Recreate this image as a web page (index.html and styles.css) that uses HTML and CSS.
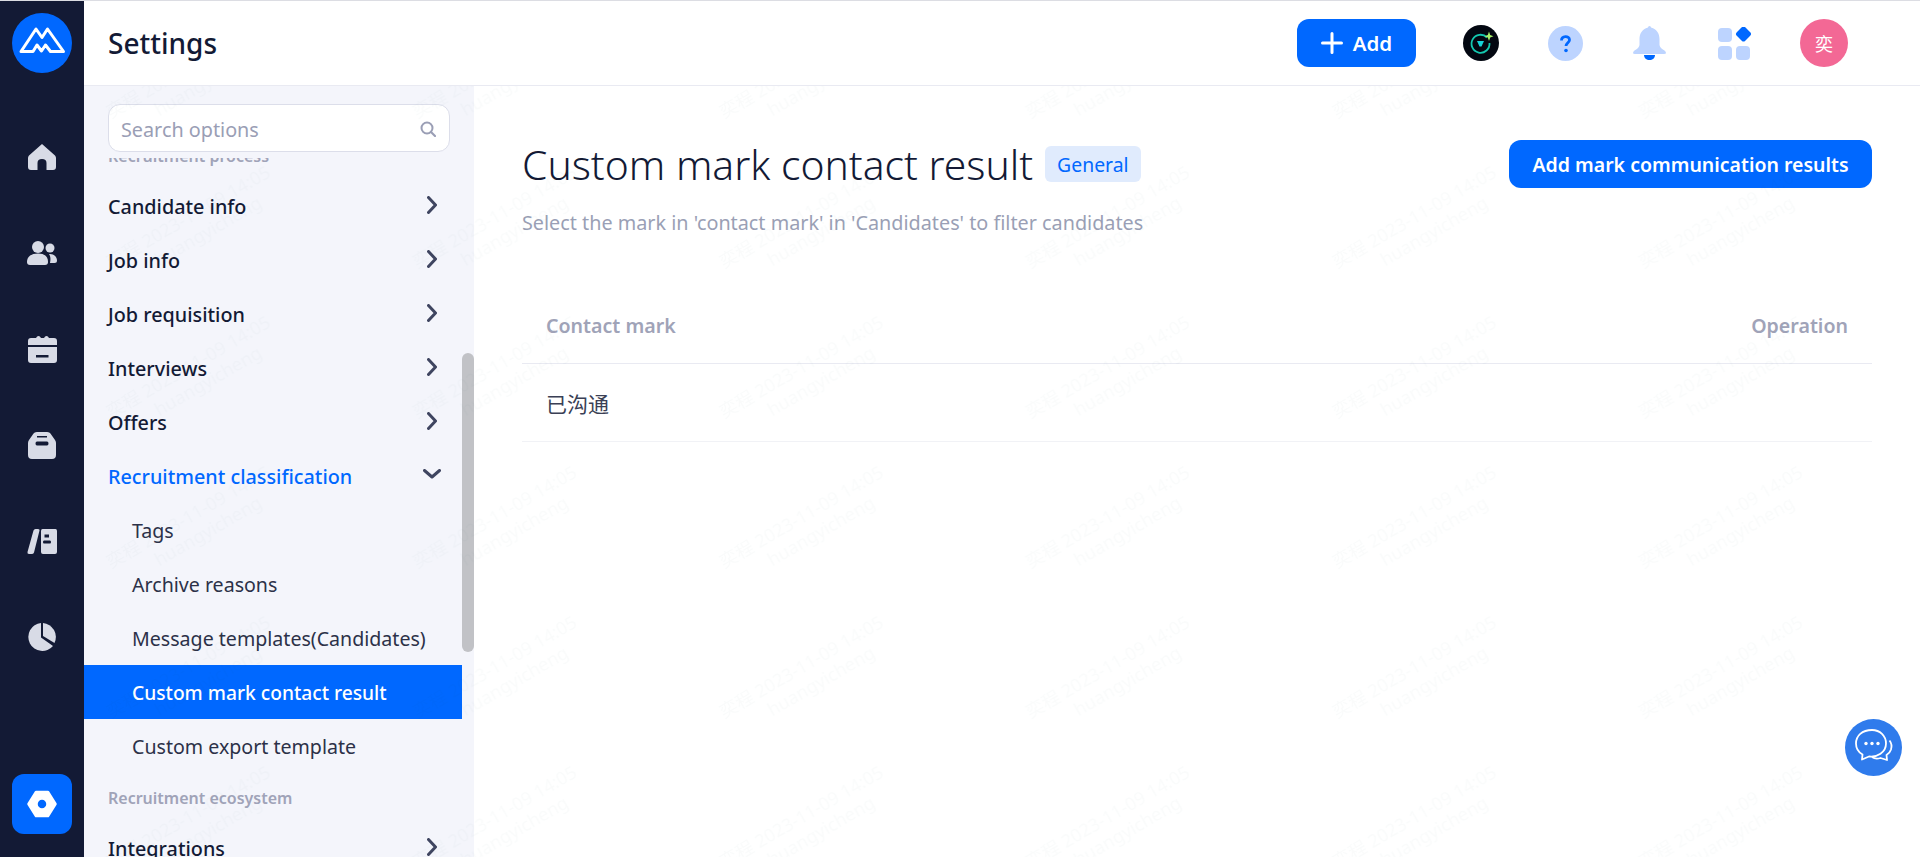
FILE: index.html
```html
<!DOCTYPE html>
<html lang="en">
<head>
<meta charset="utf-8">
<title>Settings</title>
<link rel="stylesheet" href="styles.css">
</head>
<body>
<div class="app">
  <nav class="rail">
    <div class="logo">
      <svg viewBox="0 0 60 60" width="60" height="60"><circle cx="30" cy="30" r="30" fill="#0068ff"/><path d="M9 38.500 24 16 30 24.500 35.500 16 51.500 38.500H38.500L33.500 32 29.500 38 25 32 21 38.500Z" fill="none" stroke="#fff" stroke-width="3" stroke-linejoin="round"/></svg>
    </div>
    <div class="rail-item">
      <svg viewBox="0 0 28 26" width="28" height="26"><path class="ri" d="M14 0 27 11.500Q28 12.500 28 14V23Q28 26 25 26H18.500V19Q18.500 15 14 15 9.500 15 9.500 19V26H3Q0 26 0 23V14Q0 12.500 1 11.500Z"/></svg>
    </div>
    <div class="rail-item">
      <svg viewBox="0 0 30 24" width="30" height="24"><circle class="ri" cx="11" cy="6" r="6"/><circle class="ri" cx="23" cy="7" r="4.500"/><path class="ri" d="M0 21C0 15 5 12.500 11 12.500S21 15 21 21Q21 24 18 24H3Q0 24 0 21Z"/><path class="ri" d="M22 13C27 12.500 30 16 30 19.500Q30 22 27.500 22H23C23.500 19 24 16 22 13Z"/></svg>
    </div>
    <div class="rail-item">
      <svg viewBox="0 0 29 27" width="29" height="27"><path class="ri" d="M0 9V5Q0 2 3 2H8Q9 0 10.500 0T13 2H16Q17 0 18.500 0T21 2H26Q29 2 29 5V9Z"/><path class="ri" fill-rule="evenodd" d="M0 11H29V24Q29 27 26 27H3Q0 27 0 24ZM8 19V21.500H20.500V19Z"/></svg>
    </div>
    <div class="rail-item">
      <svg viewBox="0 0 28 27" width="28" height="27"><path class="ri" fill-rule="evenodd" d="M9 0H19Q22 0 23.500 3L27 8Q28 9.500 28 11V23Q28 27 24 27H4Q0 27 0 23V11Q0 9.500 1 8L4.500 3Q6 0 9 0ZM9 4V5.500H19V4ZM9 9.500Q7.500 9.500 7.500 11.500T9 13.500H19Q20.500 13.500 20.500 11.500T19 9.500Z"/></svg>
    </div>
    <div class="rail-item">
      <svg viewBox="0 0 30 25" width="30" height="25"><path class="ri" d="M6.500 1.500Q7 0 8.500 0H11Q13 0 12.500 1.500L7 23.500Q6.500 25 4.500 25H2Q0 25 .5 23Z"/><path class="ri" fill-rule="evenodd" d="M15.500 0H28.500Q30 0 30 2V23Q30 25 28 25H16Q14 25 14 23V2Q14 0 15.500 0ZM17.500 5.500V8.500H22V5.500ZM17 11.500Q16 11.500 16 13T17 14.500H23Q24 14.500 24 13T23 11.500Z"/></svg>
    </div>
    <div class="rail-item">
      <svg viewBox="0 0 28 28" width="28" height="28"><path class="ri" d="M13 0V14.500L25 23A14 14 0 1 1 13 0Z"/><path class="ri" d="M15 0A14 14 0 0 1 26.500 20L15 13Z"/></svg>
    </div>
    <div class="rail-active">
      <svg viewBox="0 0 30 28" width="30" height="28"><path fill="#fff" fill-rule="evenodd" stroke="#fff" stroke-width="2.500" stroke-linejoin="round" d="M9 2H21L28.500 14 21 26H9L1.500 14ZM15 8.500A5.500 5.500 0 1 0 15 19.500 5.500 5.500 0 0 0 15 8.500Z"/></svg>
    </div>
  </nav>

  <div class="body">
    <header class="header">
      <h1 class="brand">Settings</h1>
      <div class="tools">
        <button class="btn btn-add">
          <svg viewBox="0 0 22 22" width="22" height="22"><path d="M11 1.500V20.500M1.500 11H20.500" stroke="#fff" stroke-width="3" stroke-linecap="round"/></svg>
          <span>Add</span>
        </button>
        <svg class="tool t-ai" viewBox="0 0 36 36" width="36" height="36"><circle cx="18" cy="18" r="18" fill="#030711"/><path d="M24 12.500A9 9 0 1 0 26.500 18" fill="none" stroke="#14c8b0" stroke-width="1.800"/><path d="M14 16H21L18.500 21.500H16.500Z" fill="#17d2d8"/><path d="M26 6.500 27.200 10 30.500 11.200 27.200 12.400 26 16 24.800 12.400 21.500 11.200 24.800 10Z" fill="#a8f06a"/></svg>
        <svg class="tool t-help" viewBox="0 0 35 35" width="35" height="35"><circle cx="17.500" cy="17.500" r="17.500" fill="#bdd4ff"/><path d="M13.500 14.500C13.500 9.500 21.500 9.500 21.500 14C21.500 16.500 18 17 18 20" fill="none" stroke="#0068ff" stroke-width="2.800"/><circle cx="18" cy="24.500" r="1.800" fill="#0068ff"/></svg>
        <svg class="tool t-bell" viewBox="0 0 33 34" width="33" height="34"><path fill="#bdd4ff" d="M16.500 0Q18 0 18 1.500C24 3 26.500 8 26.500 13V19Q27 22 31.500 24.500Q33 25.500 33 27Q33 28 31 28H2Q0 28 0 27Q0 25.500 1.500 24.500Q6 22 6.500 19V13C6.500 8 9 3 15 1.500Q15 0 16.500 0Z"/><path fill="#0068ff" d="M11 29H22C22 32 19.500 34 16.500 34S11 32 11 29Z"/></svg>
        <svg class="tool t-apps" viewBox="0 0 33 33" width="33" height="33"><rect x="0" y="1" width="14" height="14" rx="4" fill="#bdd4ff"/><rect x="0" y="19" width="14" height="14" rx="4" fill="#bdd4ff"/><rect x="18" y="19" width="14" height="14" rx="4" fill="#bdd4ff"/><rect x="19.500" y="1" width="12" height="12" rx="2.500" fill="#0068ff" transform="rotate(45 25.500 7)"/></svg>
        <div class="avatar">奕</div>
      </div>
    </header>

    <div class="content">
      <aside class="side">
        <div class="search-wrap">
          <div class="search">
            <span>Search options</span>
            <svg viewBox="0 0 16 16" width="16" height="16"><circle cx="7" cy="7" r="5.500" fill="none" stroke="#9a9eb5" stroke-width="2"/><path d="M11 11 15 15" stroke="#9a9eb5" stroke-width="2.200" stroke-linecap="round"/></svg>
          </div>
        </div>
        <div class="menu-clip">
          <ul class="menu">
            <li class="label">Recruitment process</li>
            <li class="item">Candidate info<svg class="chev" viewBox="0 0 10 18" width="10" height="18"><path d="M1.500 1.500 8.500 9 1.500 16.500"/></svg></li>
            <li class="item">Job info<svg class="chev" viewBox="0 0 10 18" width="10" height="18"><path d="M1.500 1.500 8.500 9 1.500 16.500"/></svg></li>
            <li class="item">Job requisition<svg class="chev" viewBox="0 0 10 18" width="10" height="18"><path d="M1.500 1.500 8.500 9 1.500 16.500"/></svg></li>
            <li class="item">Interviews<svg class="chev" viewBox="0 0 10 18" width="10" height="18"><path d="M1.500 1.500 8.500 9 1.500 16.500"/></svg></li>
            <li class="item">Offers<svg class="chev" viewBox="0 0 10 18" width="10" height="18"><path d="M1.500 1.500 8.500 9 1.500 16.500"/></svg></li>
            <li class="item open">Recruitment classification<svg class="chev down" viewBox="0 0 18 10" width="18" height="10"><path d="M1.500 1.500 9 8 16.500 1.500"/></svg></li>
            <li class="sub">Tags</li>
            <li class="sub">Archive reasons</li>
            <li class="sub">Message templates(Candidates)</li>
            <li class="sub current">Custom mark contact result</li>
            <li class="sub">Custom export template</li>
            <li class="label">Recruitment ecosystem</li>
            <li class="item">Integrations<svg class="chev" viewBox="0 0 10 18" width="10" height="18"><path d="M1.500 1.500 8.500 9 1.500 16.500"/></svg></li>
          </ul>
        </div>
        <div class="thumb"></div>
      </aside>

      <main class="main">
        <div class="title-row">
          <div class="title-left">
            <h2 class="title">Custom mark contact result</h2>
            <span class="tag">General</span>
          </div>
          <button class="btn btn-primary">Add mark communication results</button>
        </div>
        <p class="subtitle">Select the mark in 'contact mark' in 'Candidates' to filter candidates</p>
        <div class="table">
          <div class="thead"><span>Contact mark</span><span>Operation</span></div>
          <div class="trow"><span>已沟通</span></div>
        </div>
      </main>

      <svg class="watermark" width="100%" height="100%">
        <defs>
          <pattern id="wm" x="-44" y="64" width="306.500" height="150" patternUnits="userSpaceOnUse">
            <g transform="rotate(-30 153 75)">
              <text class="wm-text" x="153" y="72" text-anchor="middle">奕程 2023-11-09 14:05</text>
              <text class="wm-text" x="163" y="94" text-anchor="middle">huangyicheng</text>
            </g>
          </pattern>
        </defs>
        <rect width="100%" height="100%" fill="url(#wm)"/>
      </svg>
    </div>
  </div>

  <div class="chat">
    <svg viewBox="0 0 57 57" width="57" height="57"><circle cx="28.500" cy="28.500" r="28.500" fill="#2f7bec"/><path d="M27 11C17 11 11 17 11 24.500C11 30 14 33.500 17.500 35.500L17 40.500 24 37.500C32 38.500 41 33.500 41 24.500C41 17 35 11 27 11Z" fill="#2f7bec" stroke="#fff" stroke-width="1.800" stroke-linejoin="round"/><path d="M44.500 21.500C46.500 24 47 27 46 30.500C45 33.500 43.500 35 41.500 36L42 41 35.500 39C32 40 29 39.500 27 38" fill="none" stroke="#fff" stroke-width="1.800" stroke-linejoin="round"/><circle cx="21" cy="24.500" r="1.700" fill="#fff"/><circle cx="27" cy="24.500" r="1.700" fill="#fff"/><circle cx="33" cy="24.500" r="1.700" fill="#fff"/></svg>
  </div>
</div>
</body>
</html>
```
FILE: styles.css
```css
* { box-sizing: border-box; }
html, body { margin: 0; height: 100%; overflow: hidden; }
body {
  font-family: "Noto Sans", "Noto Sans CJK SC", sans-serif;
  color: #131a35;
  background: #fff;
}
ul { list-style: none; margin: 0; padding: 0; }
h1, h2, p { margin: 0; }
svg { display: block; flex: none; }

.app { display: flex; height: 857px; border-top: 1px solid #dcdde3; position: relative; }

/* left rail */
.rail { width: 84px; flex: none; background: #131a35; display: flex; flex-direction: column; align-items: center; padding-top: 12px; }
.logo { height: 60px; margin-bottom: 36px; }
.rail-item { height: 96px; width: 100%; display: flex; align-items: center; justify-content: center; }
.ri { fill: #d8dbe6; }
.rail-active { margin-top: auto; margin-bottom: 23px; width: 60px; height: 60px; border-radius: 12px; background: #0068ff; display: flex; align-items: center; justify-content: center; }

.body { flex: 1; min-width: 0; display: flex; flex-direction: column; }

/* header */
.header { height: 85px; flex: none; border-bottom: 1px solid #e9eaf2; display: flex; align-items: center; justify-content: space-between; padding: 0 72px 0 24px; }
.brand { font-size: 28px; font-weight: 500; line-height: 1; color: #131a35; }
.tools { display: flex; align-items: center; }
.btn { border: 0; background: #0068ff; color: #fff; font-family: inherit; font-weight: 600; border-radius: 12px; display: flex; align-items: center; justify-content: center; padding: 0; }
.btn-add { width: 119px; height: 48px; font-size: 20.500px; gap: 10px; margin-right: 47px; }
.t-ai { margin-right: 49px; }
.t-help { margin-right: 50px; }
.t-bell { margin-right: 52px; }
.t-apps { margin-right: 49px; }
.avatar { width: 48px; height: 48px; border-radius: 50%; background: #f36895; color: #fff; font-size: 18px; display: flex; align-items: center; justify-content: center; }

.content { flex: 1; min-height: 0; display: flex; position: relative; }

/* settings menu */
.side { width: 390px; flex: none; background: #f4f5fb; display: flex; flex-direction: column; position: relative; }
.search-wrap { padding: 18px 24px 0; height: 72px; flex: none; }
.search { width: 342px; height: 48px; background: #fff; border: 1px solid #dcdeea; border-radius: 12px; display: flex; align-items: center; justify-content: space-between; padding: 2px 13px 0 12px; color: #9a9eb5; font-size: 19.800px; }
.menu-clip { flex: 1; min-height: 0; overflow: hidden; }
.menu { margin-top: -27px; width: 378px; }
.label { height: 48px; display: flex; align-items: center; padding: 1px 0 0 24px; font-size: 16px; font-weight: 600; color: #a0a3b8; }
.item { height: 54px; display: flex; align-items: center; justify-content: space-between; padding: 1px 25px 0 24px; font-size: 19.800px; font-weight: 500; color: #131a35; }
.sub { height: 54px; display: flex; align-items: center; padding: 1px 0 0 48px; font-size: 19.600px; color: #2c3148; }
.current { background: #0068ff; color: #fff; font-size: 19.200px; font-weight: 500; }
.open { color: #0068ff; }
.chev { margin-top: -3px; }
.chev path { fill: none; stroke: #3f4560; stroke-width: 3; stroke-linecap: round; stroke-linejoin: round; }
.chev.down { margin-right: -4px; margin-top: -6px; }
.thumb { position: absolute; right: 0; top: 267px; width: 12px; height: 299px; border-radius: 6px; background: #c1c2c6; }

/* main */
.main { flex: 1; min-width: 0; padding: 54px 48px 0; }
.title-row { display: flex; align-items: center; justify-content: space-between; height: 48px; }
.title-left { display: flex; align-items: center; gap: 12px; }
.title { font-size: 40.800px; font-weight: 300; line-height: 48px; color: #131a35; }
.tag { height: 36px; padding: 0 12px; background: #e0ebfd; border-radius: 6px; color: #0068ff; font-size: 19.400px; display: flex; align-items: center; }
.btn-primary { height: 48px; width: 363px; font-size: 19.500px; }
.subtitle { margin-top: 22px; font-size: 19.800px; line-height: 26px; color: #9a9fb5; }
.table { margin-top: 50px; }
.thead { height: 78px; padding-top: 1px; display: flex; align-items: center; justify-content: space-between; padding-left: 24px; padding-right: 24px; border-bottom: 1px solid #e9eaf2; font-size: 19.600px; font-weight: 600; color: #a0a3b8; }
.trow { height: 78px; display: flex; align-items: center; padding: 0 24px; border-bottom: 1px solid #f1f2f6; font-size: 21px; color: #3a3f55; }

.watermark { position: absolute; inset: 0; pointer-events: none; }
.wm-text { font-family: "Noto Sans", "Noto Sans CJK SC", sans-serif; font-size: 18px; fill: rgba(19, 26, 53, .018); }

.chat { position: absolute; left: 1845px; top: 718px; width: 57px; height: 57px; }
```
